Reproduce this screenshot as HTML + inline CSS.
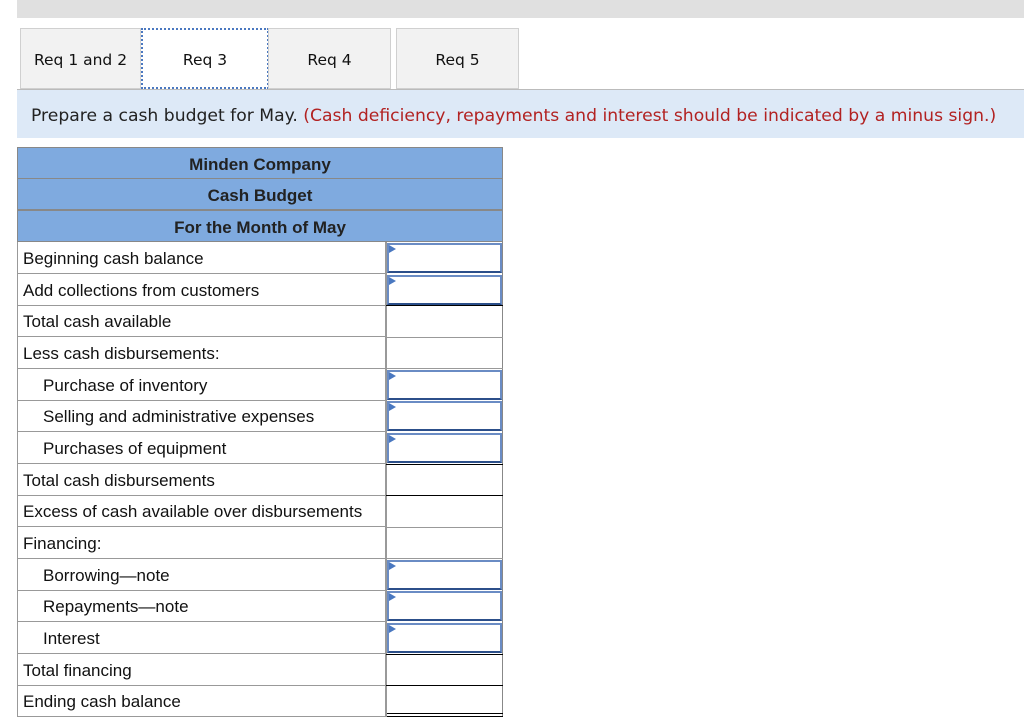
<!DOCTYPE html>
<html><head><style>
body{margin:0;width:1024px;height:727px;background:#fff;position:relative;overflow:hidden;font-family:"Liberation Sans",Arial,sans-serif}
.a{position:absolute}
.tab{position:absolute;top:28px;height:61px;background:#f2f2f2;border:1px solid #d0d0d0;box-sizing:border-box;font-family:"DejaVu Sans",sans-serif;font-size:15.5px;line-height:63px;text-align:center;color:#111;white-space:nowrap}
.h{position:absolute;left:17px;width:486px;height:32px;background:#7faadf;border:1px solid #888;box-sizing:border-box;font-weight:bold;font-size:17px;text-align:center;line-height:33px;color:#222}
.r{position:absolute;left:17px;width:369px;height:32px;border:1px solid #999;border-top:none;box-sizing:border-box;font-size:17px;line-height:33px;padding-left:5px;color:#111;white-space:nowrap}
.v{position:absolute;left:386px;width:117px;height:0;box-sizing:border-box;border-top:1px solid #000}
.i{position:absolute;left:387px;width:115px;height:30px;box-sizing:border-box;border:2px solid #6a8cc4;border-bottom-color:#2c4f8a}
.i:before{content:"";position:absolute;left:0;top:0;border-left:7px solid #4a78c0;border-top:4px solid transparent;border-bottom:4px solid transparent}
</style></head><body>
<div class="a" style="left:17px;top:0;width:1007px;height:18px;background:#e0e0e0"></div>
<div class="tab" style="left:20px;width:121px">Req 1 and 2</div>
<div class="tab" style="left:141px;width:128px;background:#fff;border:2px dotted #4a78c0;line-height:61px">Req 3</div>
<div class="tab" style="left:268px;width:123px">Req 4</div>
<div class="tab" style="left:396px;width:123px">Req 5</div>
<div class="a" style="left:17px;top:89px;width:1007px;height:1px;background:#bbb"></div>
<div class="a" style="left:17px;top:90px;width:1007px;height:48px;background:#dde9f7;font-family:'DejaVu Sans',sans-serif;font-size:17.2px;line-height:52px;color:#222;padding-left:14px;box-sizing:border-box;white-space:nowrap">Prepare a cash budget for May. <span style="color:#b22222">(Cash deficiency, repayments and interest should be indicated by a minus sign.)</span></div>
<div class="h" style="top:147px">Minden Company</div>
<div class="h" style="top:178px">Cash Budget</div>
<div class="h" style="top:210px">For the Month of May</div>
<div class="r" style="top:242px">Beginning cash balance</div>
<div class="r" style="top:274px">Add collections from customers</div>
<div class="r" style="top:305px">Total cash available</div>
<div class="r" style="top:337px">Less cash disbursements:</div>
<div class="r" style="top:369px;padding-left:25px">Purchase of inventory</div>
<div class="r" style="top:400px;padding-left:25px">Selling and administrative expenses</div>
<div class="r" style="top:432px;padding-left:25px">Purchases of equipment</div>
<div class="r" style="top:464px">Total cash disbursements</div>
<div class="r" style="top:495px">Excess of cash available over disbursements</div>
<div class="r" style="top:527px">Financing:</div>
<div class="r" style="top:559px;padding-left:25px">Borrowing—note</div>
<div class="r" style="top:590px;padding-left:25px">Repayments—note</div>
<div class="r" style="top:622px;padding-left:25px">Interest</div>
<div class="r" style="top:654px">Total financing</div>
<div class="r" style="top:685px">Ending cash balance</div>
<div class="a" style="left:385px;top:242px;width:2px;height:475px;background:#999"></div>
<div class="a" style="left:502px;top:242px;width:1px;height:475px;background:#888"></div>
<div class="i" style="top:243px"></div>
<div class="i" style="top:275px"></div>
<div class="v" style="top:305px"></div>
<div class="v" style="top:337px;border-top-color:#999"></div>
<div class="v" style="top:368px;border-top-color:#999"></div>
<div class="i" style="top:370px"></div>
<div class="i" style="top:401px"></div>
<div class="i" style="top:433px"></div>
<div class="v" style="top:464px"></div>
<div class="v" style="top:495px"></div>
<div class="v" style="top:527px;border-top-color:#999"></div>
<div class="v" style="top:558px;border-top-color:#999"></div>
<div class="i" style="top:560px"></div>
<div class="i" style="top:591px"></div>
<div class="i" style="top:623px"></div>
<div class="v" style="top:654px"></div>
<div class="v" style="top:685px"></div>
<div class="a" style="left:387px;top:713px;width:116px;height:1px;background:#000"></div>
<div class="a" style="left:387px;top:716px;width:116px;height:1px;background:#000"></div>
</body></html>
